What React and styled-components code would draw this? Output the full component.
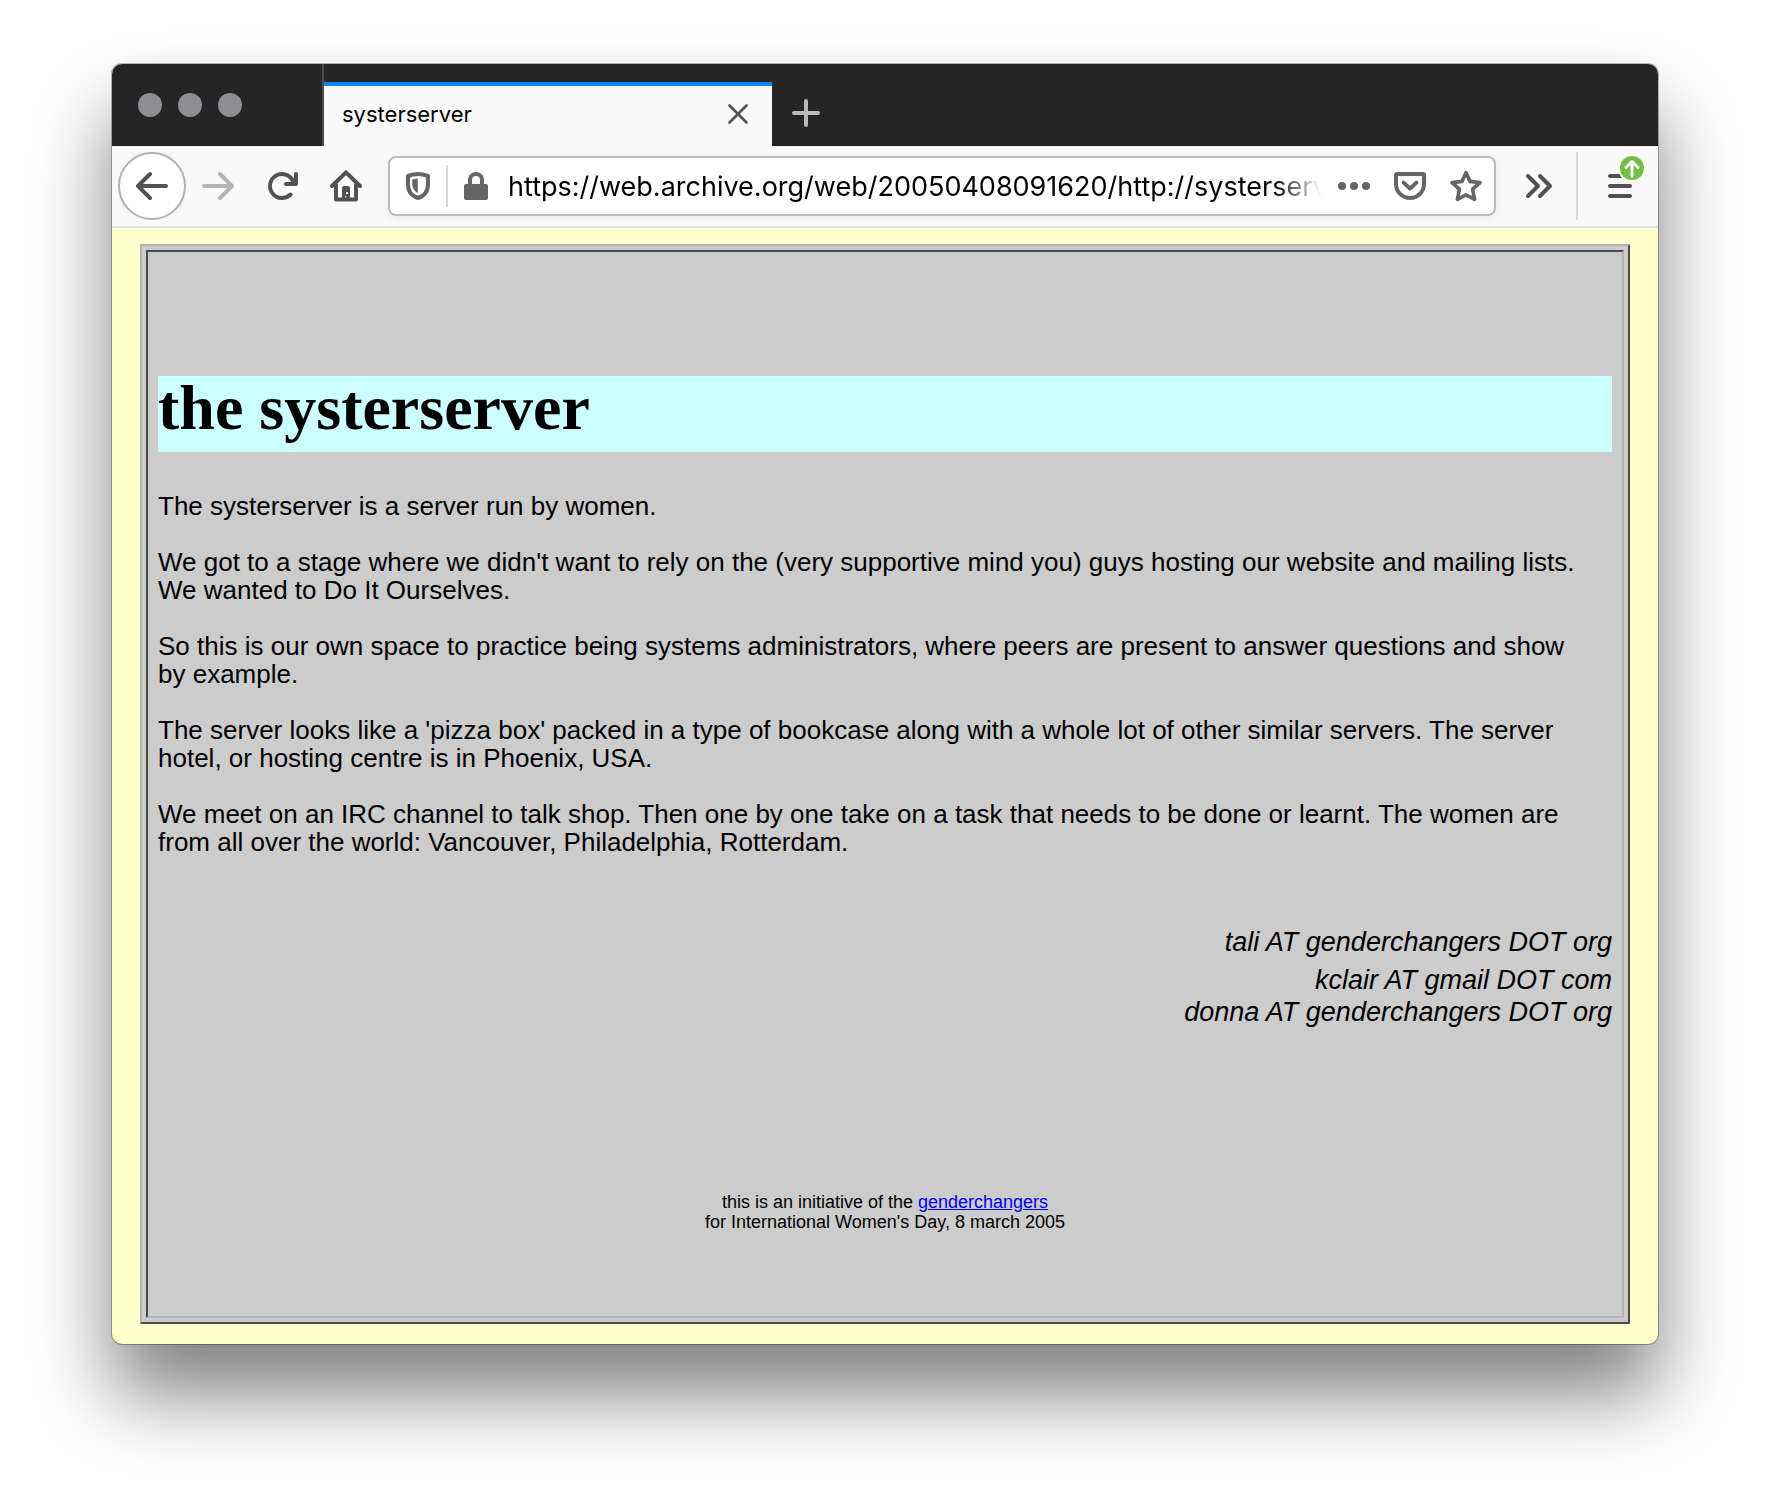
import React from "react";
import styled, { createGlobalStyle, css } from "styled-components";

const uiFont = `Inter, "Open Sans", sans-serif`;
const pageFont = `"Liberation Sans", Arial, Helvetica, sans-serif`;

const GlobalStyle = createGlobalStyle`
  *, *::before, *::after { box-sizing: border-box; }
  body { margin: 0; background: #fff; font-family: ${pageFont}; color: #000; }
`;

const Desktop = styled.div`
  padding: 64px 112px 160px;
  overflow: hidden;
`;

const BrowserWindow = styled.div`
  display: flex;
  flex-direction: column;
  border-radius: 10px;
  overflow: hidden;
  background: #ffffcc;
  box-shadow: 0 0 0 1px rgba(0, 0, 0, 0.28), 0 50px 80px rgba(0, 0, 0, 0.5);
`;

const TitleBar = styled.header`
  display: flex;
  align-items: stretch;
  height: 82px;
  background: #252525;
  box-shadow: inset 0 -1px #1b1b1b;
`;

const WindowControls = styled.div`
  display: flex;
  align-items: center;
  gap: 16px;
  width: 212px;
  padding-left: 26px;
  border-right: 2px solid #4c4c4c;
`;

const WindowDot = styled.button`
  width: 24px;
  height: 24px;
  padding: 0;
  border: 0;
  border-radius: 50%;
  background: #8e8d92;
`;

const TabStrip = styled.div`
  display: flex;
  flex: 1;
  padding-top: 18px;
`;

const Tab = styled.div`
  display: flex;
  align-items: center;
  justify-content: space-between;
  width: 448px;
  padding: 0 18px;
  background: #f9f9fa;
  box-shadow: inset 0 4px #0a84ff;
  font: 22px/28px ${uiFont};
`;

const IconButton = styled.button`
  display: flex;
  align-items: center;
  justify-content: center;
  flex: none;
  width: ${(p) => p.$width}px;
  height: ${(p) => p.$height || 56}px;
  margin: 0;
  padding: 0;
  border: 0;
  background: none;
  color: ${(p) => p.$color || "#515153"};
`;

const ToolBar = styled.nav`
  display: flex;
  align-items: center;
  height: 82px;
  padding-left: 6px;
  background: #f9f9fa;
  border-bottom: 2px solid #e0e0e1;
`;

const BackButton = styled(IconButton)`
  border: 2px solid #b1b1b2;
  border-radius: 50%;
  background: #fff;
`;

const UrlBar = styled.div`
  display: flex;
  align-items: center;
  flex: 1;
  min-width: 0;
  height: 60px;
  margin: 0 10px;
  border: 2px solid #bcbcbc;
  border-radius: 8px;
  background: #fff;
  box-shadow: 0 2px 8px rgba(0, 0, 0, 0.06);
`;

const Divider = styled.span`
  flex: none;
  width: 2px;
  height: ${(p) => p.$height}px;
  background: #d7d7db;
`;

const MenuDivider = styled(Divider)`
  margin: 0 4px;
`;

const UrlInput = styled.input`
  flex: 1;
  min-width: 0;
  height: 56px;
  margin: 0 4px;
  padding: 0;
  border: 0;
  outline: 0;
  background: none;
  color: #000;
  font: 27px/32px ${uiFont};
  mask-image: linear-gradient(to left, transparent, #000 48px);
`;

const MenuButton = styled(IconButton)`
  position: relative;
`;

const UpdateBadge = styled.svg`
  position: absolute;
  top: 8px;
  right: 12px;
`;

const Page = styled.main`
  padding: 16px 28px 20px;
`;

const raised = css`
  border: 2px solid;
  border-color: #b2b2b2 #4c4c4c #4c4c4c #b2b2b2;
`;

const sunken = css`
  border: 2px solid;
  border-color: #4c4c4c #b2b2b2 #b2b2b2 #4c4c4c;
`;

const Frame = styled.div`
  ${raised}
  padding: 4px;
  background: #ccc;
`;

const Cell = styled.article`
  ${sunken}
  padding: 124px 10px 84px;
`;

const Heading = styled.h1`
  margin: 0 0 40px;
  padding-bottom: 12px;
  background: #ccffff;
  font: bold 64px/64px "Liberation Serif", "Times New Roman", serif;
`;

const Paragraph = styled.p`
  margin: 0 0 28px;
  font-size: 26px;
  line-height: 28px;
`;

const Contacts = styled.address`
  display: flex;
  flex-direction: column;
  gap: 6px;
  margin-top: 70px;
  font-size: 27px;
  line-height: 32px;
  text-align: right;
`;

const Footer = styled.footer`
  margin-top: 164px;
  font-size: 18px;
  line-height: 20px;
  text-align: center;
`;

const PageLink = styled.a`
  color: #0000ee;
  text-decoration: underline;
`;

function Icon({ size = 32, children }) {
  return (
    <svg width={size} height={size} viewBox="0 0 16 16" fill="currentColor" aria-hidden="true">
      {children}
    </svg>
  );
}

const line = {
  fill: "none",
  stroke: "currentColor",
  strokeWidth: 2,
  strokeLinecap: "round",
  strokeLinejoin: "round",
};

const arrow =
  "M15 7H3.414l4.293-4.293a1 1 0 0 0-1.414-1.414l-6 6a1 1 0 0 0 0 1.414l6 6a1 1 0 0 0 1.414-1.414L3.414 9H15a1 1 0 0 0 0-2z";

const paragraphs = [
  "The systerserver is a server run by women.",
  "We got to a stage where we didn't want to rely on the (very supportive mind you) guys hosting our website and mailing lists. We wanted to Do It Ourselves.",
  "So this is our own space to practice being systems administrators, where peers are present to answer questions and show by\u00a0example.",
  "The server looks like a 'pizza box' packed in a type of bookcase along with a whole lot of other similar servers. The server hotel, or hosting centre is in Phoenix, USA.",
  "We meet on an IRC channel to talk shop. Then one by one take on a task that needs to be done or learnt. The women are from all over the world: Vancouver, Philadelphia, Rotterdam.",
];

function BrowserTabs() {
  return (
    <TitleBar>
      <WindowControls>
        <WindowDot aria-label="Close window" />
        <WindowDot aria-label="Minimize window" />
        <WindowDot aria-label="Zoom window" />
      </WindowControls>
      <TabStrip>
        <Tab>
          <span>systerserver</span>
          <IconButton $width={32} $height={32} aria-label="Close tab">
            <svg width="20" height="20" viewBox="0 0 20 20" aria-hidden="true">
              <path d="M1.5 1.5l17 17M18.5 1.5l-17 17" {...line} strokeWidth={2.6} />
            </svg>
          </IconButton>
        </Tab>
        <IconButton $width={68} $height={62} $color="#b9b9ba" aria-label="New tab">
          <svg width="28" height="28" viewBox="0 0 28 28" aria-hidden="true">
            <path d="M14 2v24M2 14h24" {...line} strokeWidth={4} />
          </svg>
        </IconButton>
      </TabStrip>
    </TitleBar>
  );
}

function NavigationBar() {
  return (
    <ToolBar aria-label="Navigation">
      <BackButton $width={68} $height={68} aria-label="Back">
        <Icon><path d={arrow} /></Icon>
      </BackButton>
      <IconButton $width={64} $color="#b4b4b5" aria-label="Forward">
        <Icon><path d={arrow} transform="translate(16 0) scale(-1 1)" /></Icon>
      </IconButton>
      <IconButton $width={64} aria-label="Reload">
        <Icon>
          <path d="M15 1a1 1 0 0 0-1 1v2.418A6.995 6.995 0 1 0 8 15a6.954 6.954 0 0 0 4.95-2.05 1 1 0 0 0-1.414-1.414A5.019 5.019 0 1 1 12.549 6H10a1 1 0 0 0 0 2h5a1 1 0 0 0 1-1V2a1 1 0 0 0-1-1z" />
        </Icon>
      </IconButton>
      <IconButton $width={64} aria-label="Home">
        <Icon>
          <path d="M1 8l7-6.8L15 8M3 7.5v7.3h10V7.5" {...line} />
          <path fillRule="evenodd" d="M6 15V9a1 1 0 0 1 1-1h2a1 1 0 0 1 1 1v6H8V13H7.5v2zM8 11h1v1H8z" />
        </Icon>
      </IconButton>
      <UrlBar>
        <IconButton $width={56} $color="#656566" aria-label="Tracking protection">
          <Icon>
            <path d="M3 2.9Q8 1.1 13 2.9V7c0 3.700-1.700 6-5 7-3.300-1-5-3.300-5-7z" {...line} />
            <path d="M7.900 4.300v7.300C6.200 10.600 5.200 9.200 5.100 7V4.800z" />
          </Icon>
        </IconButton>
        <Divider $height={42} />
        <IconButton $width={56} $color="#656566" aria-label="Connection secure">
          <Icon>
            <path d="M5 8V5a3 3 0 0 1 6 0v3" {...line} />
            <rect x="2" y="7" width="12" height="8" rx="1" />
          </Icon>
        </IconButton>
        <UrlInput
          aria-label="Address"
          readOnly
          value="https://web.archive.org/web/20050408091620/http://systerserver"
        />
        <IconButton $width={56} $color="#656566" aria-label="Page actions">
          <Icon>
            <circle cx="2" cy="8" r="2" />
            <circle cx="8" cy="8" r="2" />
            <circle cx="14" cy="8" r="2" />
          </Icon>
        </IconButton>
        <IconButton $width={56} $color="#656566" aria-label="Save to Pocket">
          <Icon>
            <path d="M1.500 2h13a.5.5 0 0 1 .5.5V7A7 7 0 0 1 1 7V2.500a.5.5 0 0 1 .5-.5z" {...line} />
            <path d="M4.800 6.300L8 9.300l3.200-3" {...line} />
          </Icon>
        </IconButton>
        <IconButton $width={56} $color="#656566" aria-label="Bookmark this page">
          <Icon>
            <path d="M8 1.300l2 4.400 5 .6-3.700 3.300 1 5.100L8 12.400l-4.300 2.300 1-5.100L1 6.300l5-.6z" {...line} strokeWidth={1.8} />
          </Icon>
        </IconButton>
      </UrlBar>
      <IconButton $width={66} aria-label="More tools">
        <Icon>
          <path d="M2.500 3l5 5-5 5M8.500 3l5 5-5 5" {...line} />
        </Icon>
      </IconButton>
      <MenuDivider $height={68} />
      <MenuButton $width={76} $height={80} aria-label="Open menu">
        <Icon>
          <path d="M3 3h10M3 8h10M3 13h10" {...line} />
        </Icon>
        <UpdateBadge width="28" height="28" viewBox="-2 -2 28 28" aria-hidden="true">
          <circle cx="12" cy="12" r="14" fill="#f9f9fa" />
          <circle cx="12" cy="12" r="12" fill="#73bf43" />
          <path d="M12 20V6M6 11.500L12 5.500l6 6" {...line} stroke="#fff" strokeWidth={3} />
        </UpdateBadge>
      </MenuButton>
    </ToolBar>
  );
}

export default function App() {
  return (
    <Desktop>
      <GlobalStyle />
      <BrowserWindow>
        <BrowserTabs />
        <NavigationBar />
        <Page>
          <Frame>
            <Cell>
              <Heading>the systerserver</Heading>
              {paragraphs.map((text) => (
                <Paragraph key={text}>{text}</Paragraph>
              ))}
              <Contacts>
                <span>tali AT genderchangers DOT org</span>
                <span>
                  kclair AT gmail DOT com
                  <br />
                  donna AT genderchangers DOT org
                </span>
              </Contacts>
              <Footer>
                this is an initiative of the <PageLink href="#genderchangers">genderchangers</PageLink>
                <br />
                for International Women's Day, 8 march 2005
              </Footer>
            </Cell>
          </Frame>
        </Page>
      </BrowserWindow>
    </Desktop>
  );
}
